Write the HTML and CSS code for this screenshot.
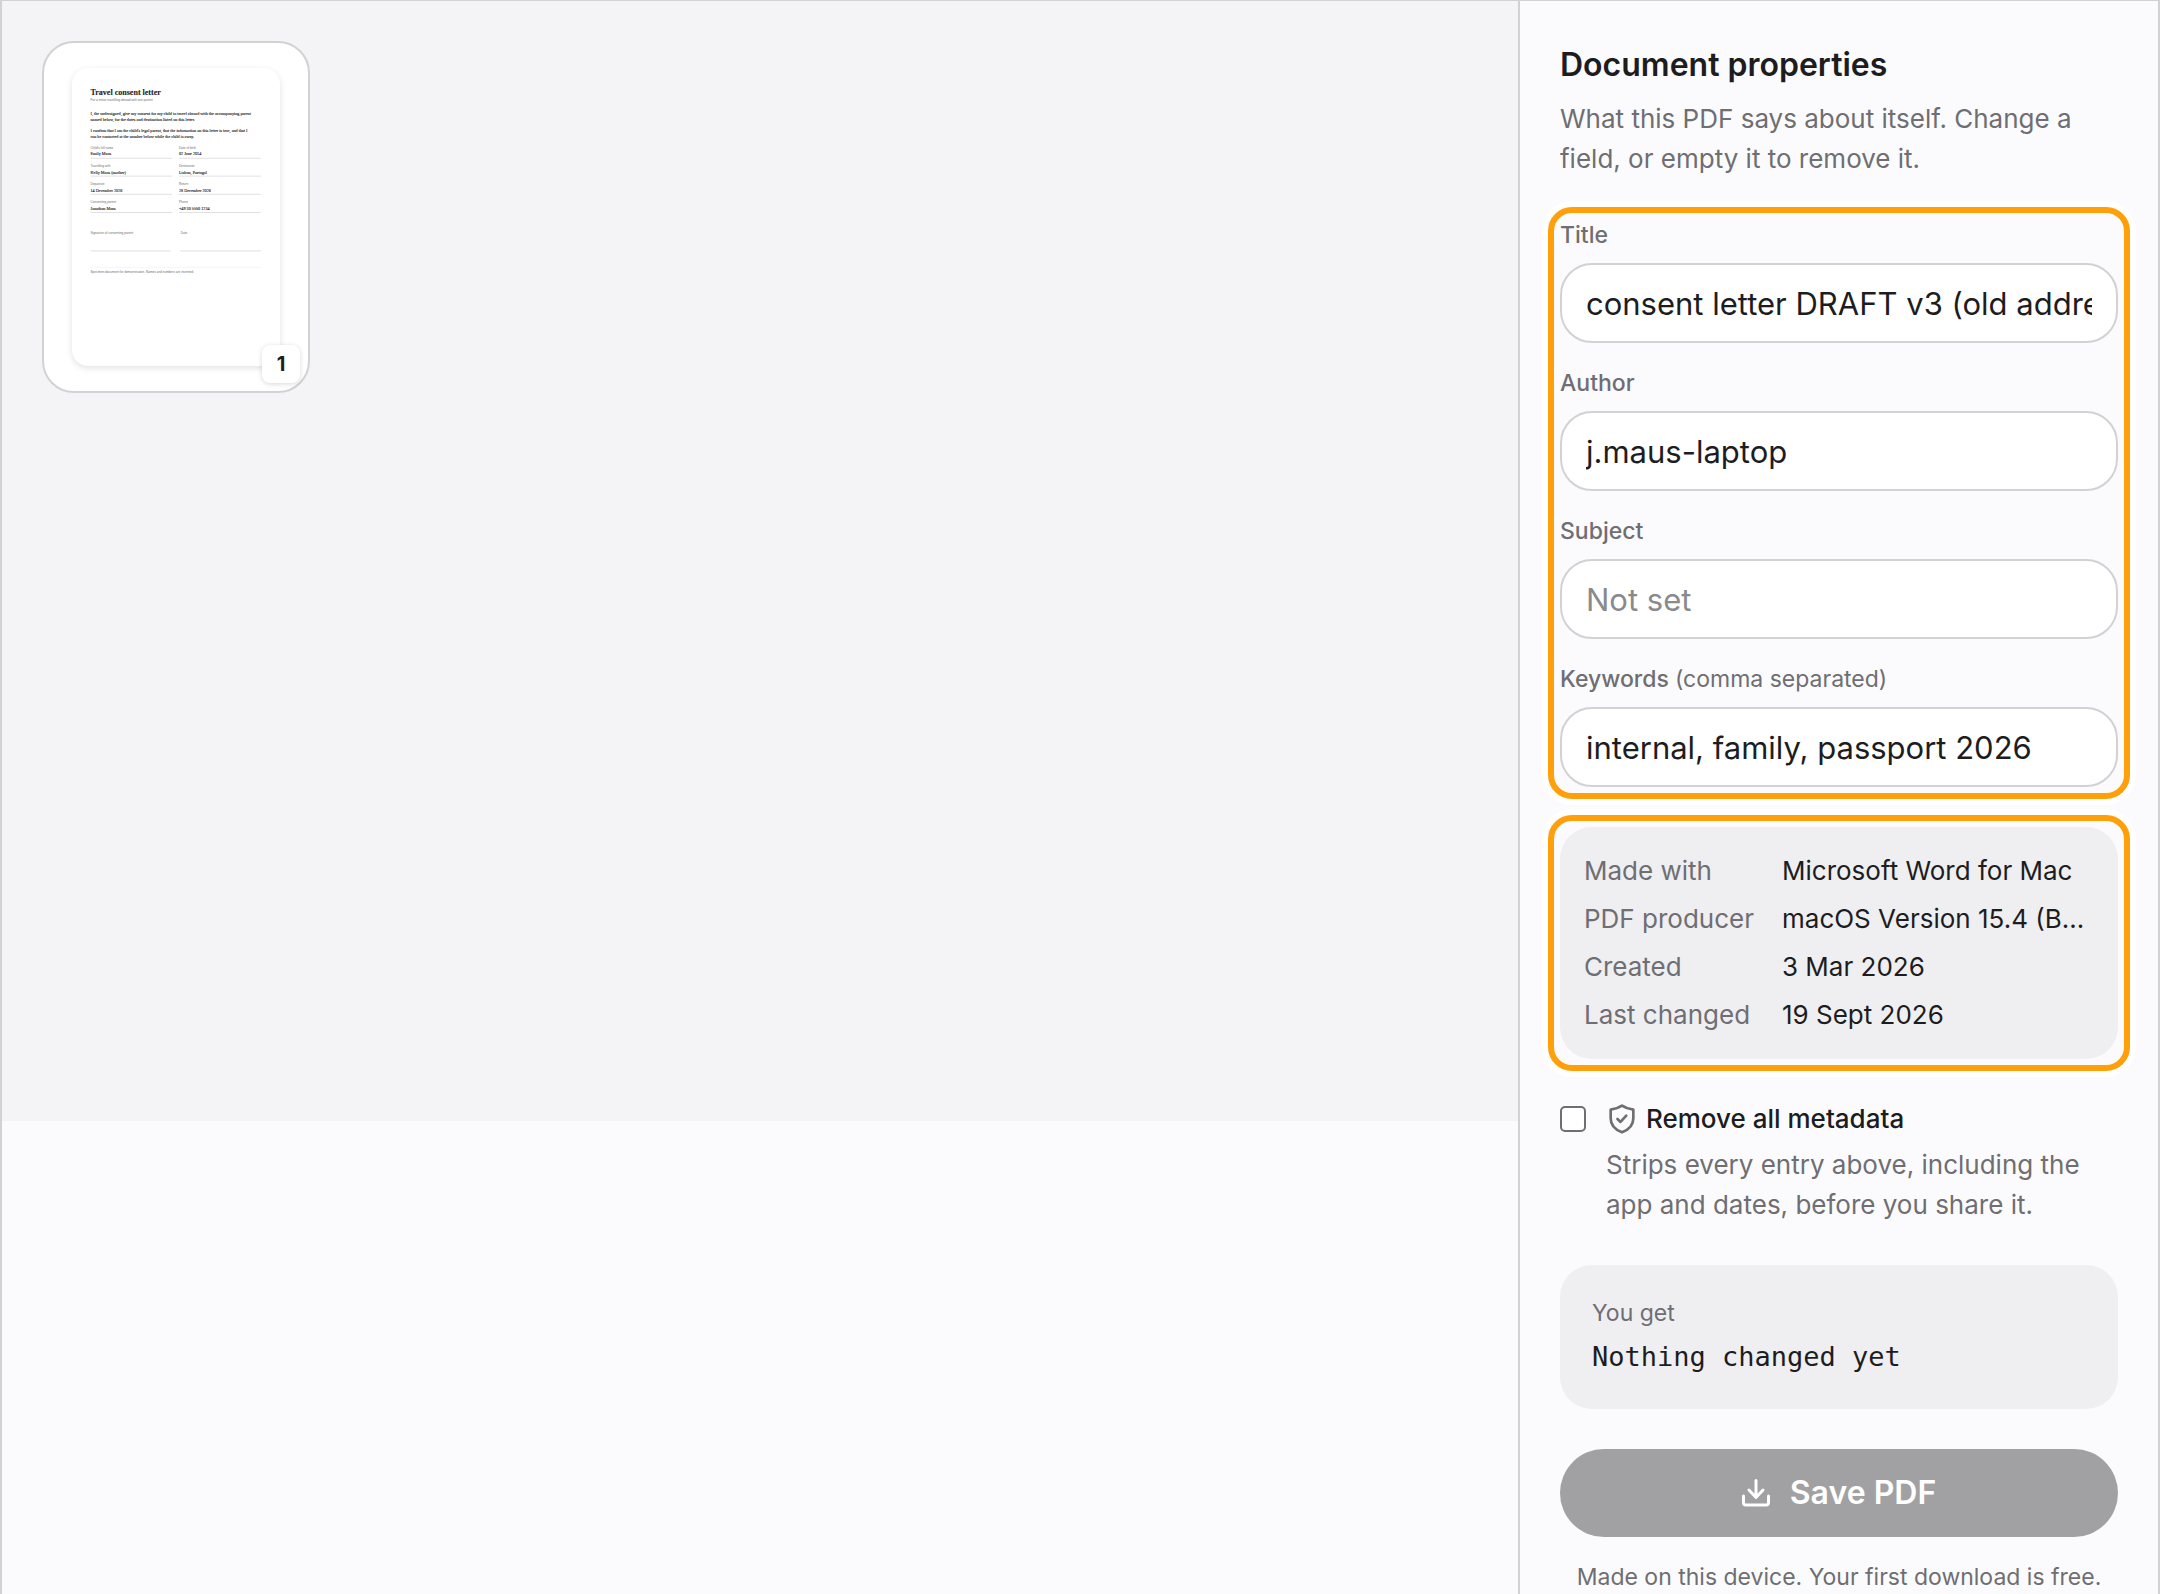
FILE: index.html
```html
<!DOCTYPE html>
<html lang="en">

<head>
    <meta charset="UTF-8">
    <meta name="viewport" content="width=device-width, initial-scale=1.0">
    <title>Document properties</title>
    <link rel="stylesheet" href="styles.css">
</head>

<body>
    <div class="app">
        <!-- page thumbnails -->
        <main class="viewer">
            <div class="pages">
                <div class="page-card">
                    <svg class="page-preview" viewBox="0 0 595 846" role="img" aria-label="Page 1">
                        <g class="doc-serif">
                            <text class="doc-title" x="53" y="74">Travel consent letter</text>
                            <text x="53" y="132">I, the undersigned, give my consent for my child to travel abroad with the accompanying parent</text>
                            <text x="53" y="149">named below, for the dates and destination listed on this letter.</text>
                            <text x="53" y="180">I confirm that I am the child's legal parent, that the information on this letter is true, and that I</text>
                            <text x="53" y="198">can be contacted at the number below while the child is away.</text>
                            <text x="53" y="247">Emily Maus</text>
                            <text x="306" y="247">02 June 2014</text>
                            <text x="53" y="299">Kelly Maus (mother)</text>
                            <text x="306" y="299">Lisbon, Portugal</text>
                            <text x="53" y="351">14 December 2026</text>
                            <text x="306" y="351">28 December 2026</text>
                            <text x="53" y="402">Jonathan Maus</text>
                            <text x="306" y="402">+49 30 5550 1234</text>
                        </g>
                        <g class="doc-small">
                            <text x="53" y="91">For a minor travelling abroad with one parent</text>
                            <text x="53" y="228">Child's full name</text>
                            <text x="306" y="228">Date of birth</text>
                            <text x="53" y="280">Travelling with</text>
                            <text x="306" y="280">Destination</text>
                            <text x="53" y="332">Departure</text>
                            <text x="306" y="332">Return</text>
                            <text x="53" y="384">Consenting parent</text>
                            <text x="306" y="384">Phone</text>
                            <text x="53" y="471">Signature of consenting parent</text>
                            <text x="311" y="471">Date</text>
                            <text x="53" y="582">Specimen document for demonstration. Names and numbers are invented.</text>
                        </g>
                        <path class="doc-line" d="M53 255H286M306 255H540M53 306H286M306 306H540M53 358H286M306 358H540M53 410H286M306 410H540M53 520H283M310 520H540" />
                        <path class="doc-line-light" d="M53 567H540" />
                    </svg>
                    <span class="page-number">1</span>
                </div>
            </div>
        </main>

        <!-- properties panel -->
        <aside class="sidebar">
            <h1 class="title">Document properties</h1>
            <p class="intro">What this PDF says about itself. Change a field, or empty it to remove it.</p>

            <div class="highlight fields">
                <div class="field">
                    <label for="doc-title">Title</label>
                    <input type="text" id="doc-title" value="consent letter DRAFT v3 (old address)">
                </div>
                <div class="field">
                    <label for="doc-author">Author</label>
                    <input type="text" id="doc-author" value="j.maus-laptop">
                </div>
                <div class="field">
                    <label for="doc-subject">Subject</label>
                    <input type="text" id="doc-subject" placeholder="Not set">
                </div>
                <div class="field">
                    <label for="doc-keywords">Keywords <span class="hint">(comma separated)</span></label>
                    <input type="text" id="doc-keywords" value="internal, family, passport 2026">
                </div>
            </div>

            <div class="highlight">
                <dl class="facts">
                    <dt>Made with</dt>
                    <dd>Microsoft Word for Mac</dd>
                    <dt>PDF producer</dt>
                    <dd>macOS Version 15.4 (Build 24E248)</dd>
                    <dt>Created</dt>
                    <dd>3 Mar 2026</dd>
                    <dt>Last changed</dt>
                    <dd>19 Sept 2026</dd>
                </dl>
            </div>

            <div class="remove">
                <input type="checkbox" id="remove-all" aria-describedby="remove-help">
                <div class="remove-text">
                    <label for="remove-all">
                        <svg class="icon-shield" viewBox="0 0 24 24" aria-hidden="true">
                            <path d="M12 2 Q15.500 4.400 20.500 5V11.500C20.500 16.500 17.500 20 12 22 6.500 20 3.500 16.500 3.500 11.500V5Q8.500 4.400 12 2Z" />
                            <path d="M8.600 12 10.900 14.200 15.200 9.500" />
                        </svg>
                        Remove all metadata
                    </label>
                    <p id="remove-help">Strips every entry above, including the app and dates, before you share it.</p>
                </div>
            </div>

            <div class="result">
                <p class="result-label">You get</p>
                <p class="result-value">Nothing changed yet</p>
            </div>

            <button type="button" class="save" disabled>
                <svg class="icon-save" viewBox="0 0 28 30" aria-hidden="true">
                    <path d="M14 2.500V19M7 12 14 19.500 21 12" />
                    <path d="M1.500 18V24.500Q1.500 27 4 27H24Q26.500 27 26.500 24.500V18" />
                </svg>
                Save PDF
            </button>
            <p class="note">Made on this device. Your first download is free.</p>
        </aside>
    </div>
</body>

</html>
```
FILE: styles.css
```css
* {
    margin: 0;
    padding: 0;
    box-sizing: border-box;
}

body {
    font-family: Inter, "Liberation Sans", sans-serif;
    font-size: 26px;
    line-height: 40px;
    color: #1d1d1f;
    background: #fbfbfd;
}

.app {
    display: flex;
    min-height: 100vh;
    border: 2px solid #d2d2d5;
    border-top-width: 1px;
    border-bottom: 0;
}

/* left side */
.viewer {
    flex: 1;
    min-width: 0;
}

.pages {
    display: flex;
    flex-wrap: wrap;
    align-items: flex-start;
    gap: 24px;
    min-height: 1120px;
    padding: 40px;
    background: #f4f4f6;
}

.page-card {
    position: relative;
    padding: 25px 28px;
    border: 2px solid #d2d2d5;
    border-radius: 32px;
    background: #fff;
}

.page-preview {
    display: block;
    width: 208px;
    height: 298px;
    border-radius: 16px;
    background: #fff;
    box-shadow: 0 2px 6px rgba(0, 0, 0, .12);
}

.doc-serif {
    font-family: "Liberation Serif", serif;
    font-size: 12px;
    fill: #1d1d1f;
    stroke: #1d1d1f;
    stroke-width: .3;
}

.doc-title {
    font-size: 23px;
    font-weight: bold;
}

.doc-small {
    font-family: "Liberation Sans", sans-serif;
    font-size: 9px;
    fill: #6e6e73;
}

.doc-line {
    stroke: #d2d2d7;
    stroke-width: 2;
}

.doc-line-light {
    stroke: #f2f2f4;
    stroke-width: 2;
}

/* page number lies over the corner of the card */
.page-number {
    position: absolute;
    right: 8px;
    bottom: 8px;
    min-width: 38px;
    border-radius: 8px;
    background: #fff;
    box-shadow: 0 1px 5px rgba(0, 0, 0, .16);
    font-size: 20px;
    font-weight: 700;
    line-height: 38px;
    text-align: center;
}

/* right side */
.sidebar {
    width: 640px;
    padding: 40px 40px 0;
    border-left: 2px solid #d2d2d5;
}

.title {
    font-size: 32px;
    font-weight: 600;
    line-height: 48px;
}

.intro {
    margin: 10px 0 28px;
    color: #6e6e73;
}

.highlight {
    margin: 0 -12px 16px;
    padding: 6px;
    border: 6px solid #ff9f0a;
    border-radius: 24px;
    box-shadow: 0 0 0 6px #fff;
}

.fields {
    display: flex;
    flex-direction: column;
    gap: 24px;
}

.field {
    display: flex;
    flex-direction: column;
    gap: 12px;
}

.field label {
    font-size: 23px;
    font-weight: 500;
    line-height: 32px;
    color: #6e6e73;
}

.field .hint {
    font-weight: 400;
}

.field input {
    width: 100%;
    height: 80px;
    padding: 0 24px;
    border: 2px solid #d2d2d5;
    border-radius: 32px;
    background: #fff;
    font: inherit;
    font-size: 31px;
    color: #1d1d1f;
}

.field input::placeholder {
    color: #8a8a8e;
}

.facts {
    display: grid;
    grid-template-columns: auto 1fr;
    gap: 8px 28px;
    padding: 24px;
    border-radius: 32px;
    background: #efeff1;
}

.facts dt {
    color: #6e6e73;
}

.facts dd {
    overflow: hidden;
    white-space: nowrap;
    text-overflow: ellipsis;
}

.remove {
    display: flex;
    gap: 20px;
    margin-top: 28px;
}

.remove input {
    appearance: none;
    flex: none;
    width: 26px;
    height: 26px;
    margin-top: 7px;
    border: 2px solid #6e6e73;
    border-radius: 5px;
    background: #fff;
}

.remove label {
    display: flex;
    align-items: center;
    gap: 8px;
    font-weight: 500;
}

.remove p {
    margin-top: 6px;
    color: #6e6e73;
}

.icon-shield {
    width: 32px;
    height: 32px;
    fill: none;
    stroke: #6e6e73;
    stroke-width: 2;
    stroke-linecap: round;
    stroke-linejoin: round;
}

.result {
    margin: 40px 0;
    padding: 32px;
    border-radius: 32px;
    background: #efeff1;
}

.result-label {
    margin-bottom: 8px;
    font-size: 23px;
    line-height: 32px;
    color: #6e6e73;
}

.result-value {
    font-family: "DejaVu Sans Mono", monospace;
    font-size: 27px;
}

.save {
    display: flex;
    align-items: center;
    justify-content: center;
    gap: 20px;
    width: 100%;
    height: 88px;
    border: 0;
    border-radius: 44px;
    background: #a1a1a3;
    color: #fff;
    font: inherit;
    font-size: 32px;
    font-weight: 600;
}

.icon-save {
    width: 28px;
    height: 30px;
    fill: none;
    stroke: #fff;
    stroke-width: 3;
    stroke-linecap: round;
    stroke-linejoin: round;
}

.note {
    margin-top: 24px;
    font-size: 23px;
    line-height: 32px;
    text-align: center;
    color: #6e6e73;
}
```
